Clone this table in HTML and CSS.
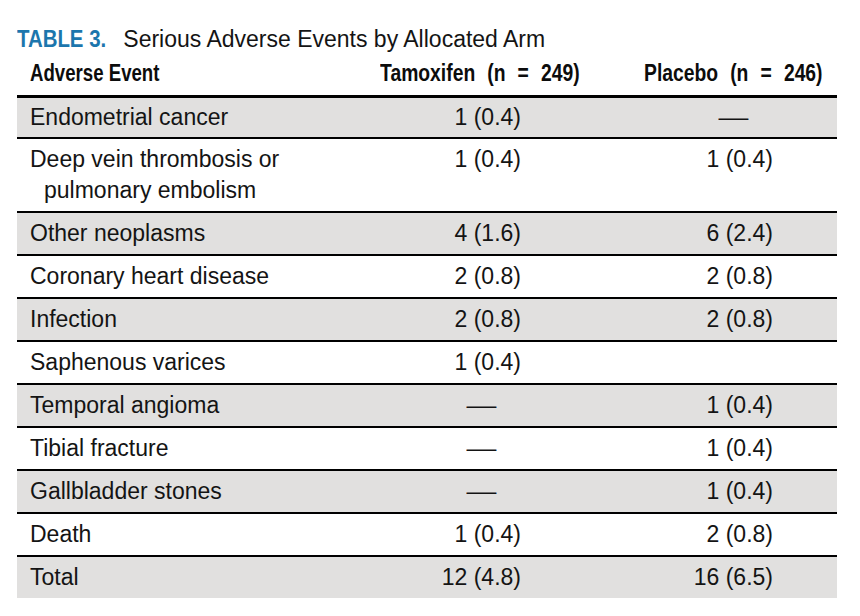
FILE: index.html
```html
<!DOCTYPE html>
<html lang="en">
<head>
<meta charset="utf-8">
<title>Table 3. Serious Adverse Events by Allocated Arm</title>
<link rel="stylesheet" href="styles.css">
</head>
<body>
<div class="page">
  <p class="caption"><span class="label">TABLE 3.</span> Serious Adverse Events by Allocated Arm</p>
  <table class="events">
    <colgroup>
      <col class="col-event">
      <col class="col-tam">
      <col class="col-pla">
    </colgroup>
    <thead>
      <tr>
        <th class="h-event"><span class="hl">Adverse Event</span></th>
        <th class="h-tam"><span class="hr">Tamoxifen (n = 249)</span></th>
        <th class="h-pla"><span class="hr">Placebo (n = 246)</span></th>
      </tr>
    </thead>
    <tbody>
      <tr class="shade first">
        <td class="event">Endometrial cancer</td>
        <td class="tam"><span class="num">1 (0.4)</span></td>
        <td class="pla"><span class="dash">—</span></td>
      </tr>
      <tr>
        <td class="event">Deep vein thrombosis or<span class="cont">pulmonary embolism</span></td>
        <td class="tam"><span class="num">1 (0.4)</span></td>
        <td class="pla"><span class="num">1 (0.4)</span></td>
      </tr>
      <tr class="shade">
        <td class="event">Other neoplasms</td>
        <td class="tam"><span class="num">4 (1.6)</span></td>
        <td class="pla"><span class="num">6 (2.4)</span></td>
      </tr>
      <tr>
        <td class="event">Coronary heart disease</td>
        <td class="tam"><span class="num">2 (0.8)</span></td>
        <td class="pla"><span class="num">2 (0.8)</span></td>
      </tr>
      <tr class="shade">
        <td class="event">Infection</td>
        <td class="tam"><span class="num">2 (0.8)</span></td>
        <td class="pla"><span class="num">2 (0.8)</span></td>
      </tr>
      <tr>
        <td class="event">Saphenous varices</td>
        <td class="tam"><span class="num">1 (0.4)</span></td>
        <td class="pla"></td>
      </tr>
      <tr class="shade">
        <td class="event">Temporal angioma</td>
        <td class="tam"><span class="dash">—</span></td>
        <td class="pla"><span class="num">1 (0.4)</span></td>
      </tr>
      <tr>
        <td class="event">Tibial fracture</td>
        <td class="tam"><span class="dash">—</span></td>
        <td class="pla"><span class="num">1 (0.4)</span></td>
      </tr>
      <tr class="shade">
        <td class="event">Gallbladder stones</td>
        <td class="tam"><span class="dash">—</span></td>
        <td class="pla"><span class="num">1 (0.4)</span></td>
      </tr>
      <tr>
        <td class="event">Death</td>
        <td class="tam"><span class="num">1 (0.4)</span></td>
        <td class="pla"><span class="num">2 (0.8)</span></td>
      </tr>
      <tr class="shade last">
        <td class="event">Total</td>
        <td class="tam"><span class="num">12 (4.8)</span></td>
        <td class="pla"><span class="num">16 (6.5)</span></td>
      </tr>
    </tbody>
  </table>
</div>
</body>
</html>
```

FILE: styles.css
```css
html, body {
  margin: 0;
  padding: 0;
  background: #ffffff;
}

body {
  font-family: "Liberation Sans", Arial, Helvetica, sans-serif;
  color: #141414;
}

.page {
  width: 820px;
  padding: 26px 0 0 17px;
}

.caption {
  margin: 0;
  font-size: 23px;
  line-height: 26px;
  white-space: nowrap;
}

.caption .label {
  display: inline-block;
  font-size: 24px;
  font-weight: bold;
  color: #1c76ad;
  transform: scaleX(0.85);
  transform-origin: left center;
  margin-right: -5px;
}

.events {
  width: 820px;
  border-collapse: collapse;
  table-layout: fixed;
}

.col-event { width: 345px; }
.col-tam { width: 250px; }
.col-pla { width: 225px; }

.events th {
  font-size: 23px;
  line-height: 24px;
  font-weight: bold;
  color: #0c0c0c;
  padding: 9px 0 10px;
  white-space: nowrap;
}

.events thead tr {
  border-bottom: 3px solid #000000;
}

.hl,
.hr {
  display: inline-block;
}

.hl {
  transform: scaleX(0.81);
  transform-origin: left center;
}

.hr {
  transform: scaleX(0.84);
  transform-origin: right center;
  word-spacing: 8px;
  margin-left: -80px;
}

.h-event {
  text-align: left;
  padding-left: 13px !important;
}

.h-tam {
  text-align: right;
  padding-right: 32px !important;
}

.h-pla {
  text-align: right;
  padding-right: 14px !important;
}

.events td {
  font-size: 23px;
  line-height: 28px;
  padding: 6px 0 7px;
  vertical-align: top;
  white-space: nowrap;
}

.events tbody tr {
  border-bottom: 2px solid #000000;
}

.events tbody tr.last {
  border-bottom: none;
}

.events tbody tr.first td {
  padding-top: 5px;
  padding-bottom: 6px;
}

.events tr.shade {
  background: #e1e0df;
}

.event {
  padding-left: 13px !important;
  text-align: left;
}

.cont {
  display: block;
  padding-left: 14px;
  padding-top: 3px;
}

.tam {
  text-align: center;
  padding-right: 12px !important;
}

.pla {
  text-align: center;
  padding-left: 17px !important;
}

.num {
  display: inline-block;
  width: 80px;
  text-align: right;
}

.dash {
  display: inline-block;
  transform: scaleX(1.3);
}
```
